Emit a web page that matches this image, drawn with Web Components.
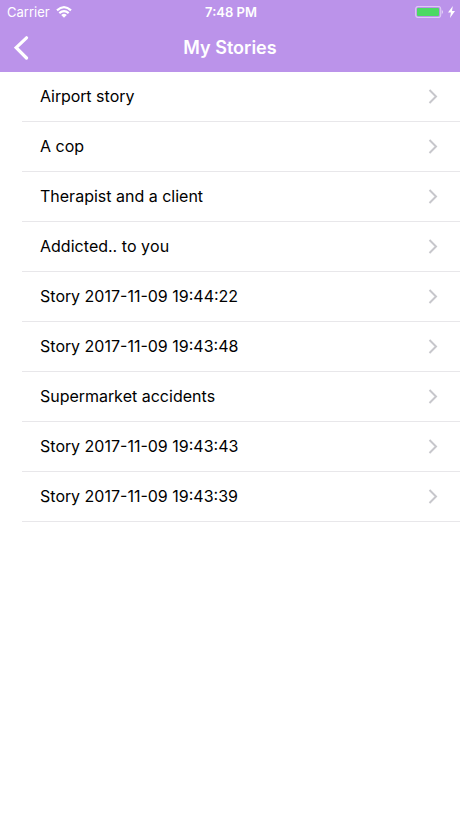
<!DOCTYPE html>
<html lang="en">
<head>
<meta charset="utf-8">
<meta name="viewport" content="width=device-width, initial-scale=1">
<title>My Stories</title>
<style>
body{margin:0;background:#fff;color:#000;font-family:Inter,"Liberation Sans",sans-serif}
</style>
</head>
<body>
<stories-screen></stories-screen>
<script>
class StatusBar extends HTMLElement{
  constructor(){super();this.attachShadow({mode:'open'}).innerHTML=`
<style>
:host{display:grid;grid-template-columns:1fr auto 1fr;align-items:center;height:24px;padding:0 5px 0 7px;font-size:13px;line-height:16px}
.left,.right{display:flex;align-items:center;gap:6px}
.right{justify-content:flex-end;gap:5px}
.time{font-weight:600}
svg{display:block}
</style>
<div class="left"><span>Carrier</span>
<svg width="16" height="12" viewBox="0 0 16 12" fill="none" stroke="#fff" stroke-width="2.2" aria-hidden="true"><path d="M1 4.4Q8-2 15 4.4M3.3 7.1Q8 3 12.7 7.1"/><path d="M5.2 9Q8 6.4 10.8 9L8 11.8Z" fill="#fff" stroke="none"/></svg></div>
<span class="time">7:48 PM</span>
<div class="right">
<svg width="28" height="12" viewBox="0 0 28 12" aria-hidden="true"><rect x=".7" y=".5" width="25" height="11" rx="2.5" fill="none" stroke="#fff" stroke-opacity=".5" stroke-width="1.2"/><rect x="2" y="2" width="22" height="8" rx="1" fill="#4cd964"/><path d="M26.8 4Q28 4.5 28 6T26.8 8Z" fill="#fff" fill-opacity=".6"/></svg>
<svg width="7" height="12" viewBox="0 0 7 12" aria-hidden="true"><path d="M4.8 0 0 6.6H2.9L2 12 7 5.1H4Z" fill="#fff"/></svg></div>`}
}
customElements.define('status-bar',StatusBar);

class NavBar extends HTMLElement{
  constructor(){super();this.attachShadow({mode:'open'}).innerHTML=`
<style>
:host{display:grid;grid-template-columns:48px 1fr 48px;align-items:center;height:48px}
button{border:0;background:none;padding:0 0 0 14px;height:48px;color:inherit;cursor:pointer}
h1{margin:0;font-size:18px;line-height:24px;font-weight:600;text-align:center}
svg{display:block}
</style>
<button type="button" aria-label="Back"><svg width="15" height="24" viewBox="0 0 15 24" fill="none" stroke="currentColor" stroke-width="3.2" stroke-linecap="round"><path d="M12.5 1.8 2.2 11.6 12.5 22"/></svg></button>
<h1><slot></slot></h1>`}
}
customElements.define('nav-bar',NavBar);

class StoryRow extends HTMLElement{
  constructor(){super();this.attachShadow({mode:'open'}).innerHTML=`
<style>
:host{display:block;border-bottom:1px solid #e8e7ea}
button{display:flex;justify-content:space-between;align-items:center;width:100%;height:49px;border:0;background:none;margin:0;padding:0 22px 0 18px;font:inherit;font-size:16px;line-height:21px;font-kerning:none;color:inherit;text-align:left;cursor:pointer}
svg{display:block}
</style>
<button type="button"><span><slot></slot></span><svg width="10" height="17" viewBox="0 0 10 17" fill="none" stroke="#c7c7cc" stroke-width="2" aria-hidden="true"><path d="M1.5 2 8 8.5 1.5 15"/></svg></button>`}
}
customElements.define('story-row',StoryRow);

class StoriesScreen extends HTMLElement{
  constructor(){super();this.attachShadow({mode:'open'}).innerHTML=`
<style>
:host{display:block}
header{background:#bb93ea;color:#fff}
main{padding-left:22px}
</style>
<header><status-bar></status-bar><nav-bar>My Stories</nav-bar></header>
<main>
<story-row>Airport story</story-row>
<story-row>A cop</story-row>
<story-row>Therapist and a client</story-row>
<story-row>Addicted.. to you</story-row>
<story-row>Story 2017-11-09 19:44:22</story-row>
<story-row>Story 2017-11-09 19:43:48</story-row>
<story-row>Supermarket accidents</story-row>
<story-row>Story 2017-11-09 19:43:43</story-row>
<story-row>Story 2017-11-09 19:43:39</story-row>
</main>`}
}
customElements.define('stories-screen',StoriesScreen);
</script>
</body>
</html>
